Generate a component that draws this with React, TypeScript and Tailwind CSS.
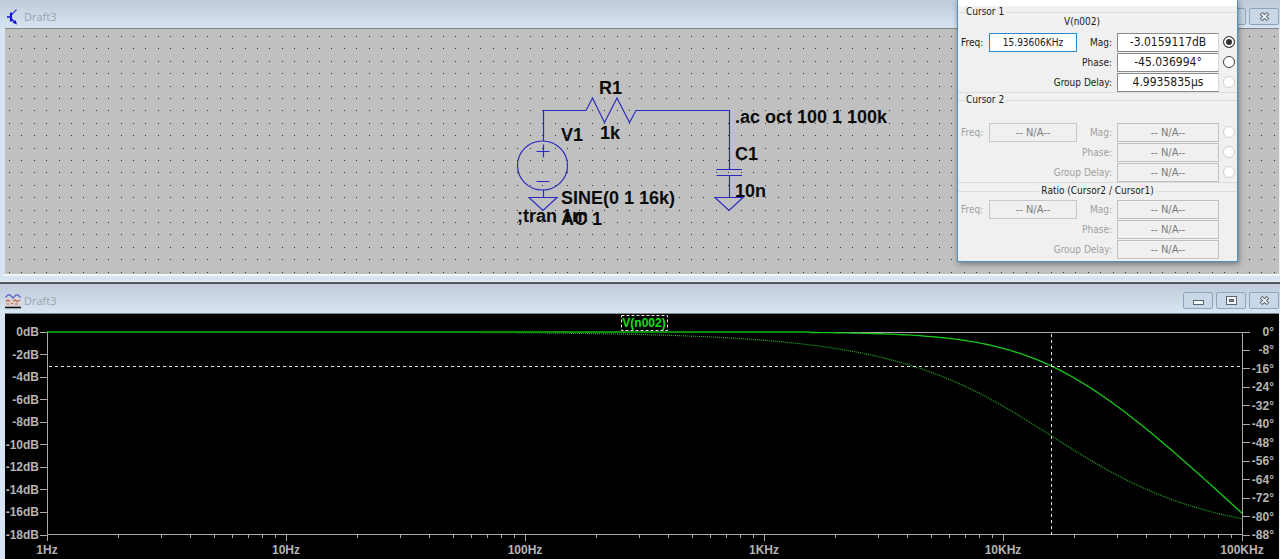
import React from "react";

const GRID_STEP = 12.4;

function buildDotPath() {
  let d = "";
  for (let row = 0; row < 20; row++) {
    const y = Math.round(36 + row * GRID_STEP);
    for (let col = 0; col < 103; col++) {
      d += `M${Math.round(9 + col * GRID_STEP)} ${y}h1v1h-1z`;
    }
  }
  return d;
}

const DOTS = buildDotPath();

const LEFT = 47;
const RIGHT = 1242;
const TOP = 332;
const BOTTOM = 535;
const DECADE = (RIGHT - LEFT) / 5;
const CORNER_HZ = 15915.5;

const xAt = (hz: number) => LEFT + Math.log10(hz) * DECADE;
const yAtDb = (db: number) => TOP + (-db / 18) * (BOTTOM - TOP);
const yAtDeg = (deg: number) => TOP + (-deg / 88) * (BOTTOM - TOP);

function trace(yOf: (hz: number) => number) {
  const points: string[] = [];
  for (let i = 0; i <= 300; i++) {
    const hz = Math.pow(10, (i / 300) * 5);
    points.push(`${xAt(hz).toFixed(2)},${yOf(hz).toFixed(2)}`);
  }
  return points.join(" ");
}

const MAGNITUDE = trace((hz) => yAtDb(-10 * Math.log10(1 + (hz / CORNER_HZ) ** 2)));
const PHASE = trace((hz) => yAtDeg((-Math.atan(hz / CORNER_HZ) * 180) / Math.PI));

const DB_TICKS = [0, -2, -4, -6, -8, -10, -12, -14, -16, -18];
const DEG_TICKS = [0, -8, -16, -24, -32, -40, -48, -56, -64, -72, -80, -88];
const FREQ_LABELS = ["1Hz", "10Hz", "100Hz", "1KHz", "10KHz", "100KHz"];

function WindowButton({ label, children }: { label: string; children: React.ReactNode }) {
  return (
    <button
      type="button"
      aria-label={label}
      className="flex h-[17px] w-[30px] items-center justify-center rounded-[2px] border border-[#8fa3bd] bg-[#c9d7e6]"
    >
      {children}
    </button>
  );
}

function CloseGlyph() {
  return (
    <svg width="11" height="9" viewBox="0 0 11 9">
      <path d="M2 1.2L9 7.8M9 1.2L2 7.8" stroke="#5a6470" strokeWidth="3.8" />
      <path d="M2.5 1.700L8.500 7.300M8.500 1.700L2.500 7.300" stroke="#f4f7fa" strokeWidth="1.7" />
    </svg>
  );
}

function WindowButtons() {
  return (
    <div className="flex gap-[3px]">
      <WindowButton label="Minimize">
        <svg width="11" height="9" viewBox="0 0 11 9">
          <rect x="0.5" y="4.5" width="10" height="4" fill="#f4f7fa" stroke="#5a6470" />
        </svg>
      </WindowButton>
      <WindowButton label="Restore">
        <svg width="11" height="9" viewBox="0 0 11 9">
          <rect x="0.5" y="0.5" width="10" height="8" fill="#f4f7fa" stroke="#5a6470" />
          <rect x="3.5" y="3.5" width="4" height="2" fill="#8b97a6" stroke="#5a6470" />
        </svg>
      </WindowButton>
      <WindowButton label="Close">
        <CloseGlyph />
      </WindowButton>
    </div>
  );
}

function SchematicIcon() {
  return (
    <svg width="14" height="18" viewBox="0 0 14 18">
      <g stroke="#1414e0" fill="none">
        <path d="M1 9H5" strokeWidth="1.6" />
        <path d="M5 4.5V13.5" strokeWidth="2.2" />
        <path d="M5.5 7L10.5 1.5" strokeWidth="1.1" />
        <path d="M5.5 11L9 14.5" strokeWidth="1.4" />
      </g>
      <path d="M11 16.5L6.6 14.8L9.6 12z" fill="#1414e0" />
    </svg>
  );
}

function PlotIcon() {
  return (
    <svg width="16" height="16" viewBox="0 0 16 16">
      <path d="M0.5 4.5L3 2L5 2L8 5L11 2L13 2L15.5 4.5" stroke="#6a64c8" strokeWidth="1.4" fill="none" />
      <rect x="0.5" y="6" width="15" height="7" fill="#dfd0d0" />
      <path d="M1 8.5L3 7L5 8.5M8 8L10 7L12 8.5L15 7" stroke="#b5624f" strokeWidth="1.1" fill="none" />
      <path d="M2 11H4M6 10.5H8M10 11H13" stroke="#b5624f" strokeWidth="1.2" />
      <path d="M0 14.5H16" stroke="#101010" strokeWidth="1.6" />
    </svg>
  );
}

function Schematic() {
  return (
    <svg viewBox="5 29 1274 245" className="block h-auto w-full bg-[#c0c0c0]" role="img" aria-label="RC low-pass schematic">
      <path d={DOTS} fill="#303030" shapeRendering="crispEdges" />
      <g stroke="#2a2abf" strokeWidth="1.2" fill="none">
        <path d="M543.5 141V110.5H586L592.5 98L604.5 122.5L617 98L629.5 122.5L636 110.5H729.5V169.5" />
        <ellipse cx="542.5" cy="165.5" rx="25" ry="24.5" />
        <path d="M543.5 144.5V157.5M536.5 151.5H549.5M536.5 181.5H549.5" />
        <path d="M543.5 190V197.5M529 197.5H557L543 210.5z" />
        <path d="M716.5 169.5H742M716.5 175.5H742M729.5 175.5V197.5M715 197.5H743L729 210.5z" />
      </g>
      <g className="fill-[#0a0a0a] font-['Liberation_Sans',sans-serif] text-[18px] font-bold">
        <text x="599" y="94">R1</text>
        <text x="600" y="139">1k</text>
        <text x="561" y="141">V1</text>
        <text x="735" y="123">.ac oct 100 1 100k</text>
        <text x="735" y="160">C1</text>
        <text x="735" y="197">10n</text>
        <text x="561" y="204">SINE(0 1 16k)</text>
        <text x="517" y="222">;tran 1m</text>
        <text x="561" y="225">AC 1</text>
      </g>
    </svg>
  );
}

function Plot() {
  return (
    <svg viewBox="5 314 1274 245" className="block h-auto w-full bg-black" role="img" aria-label="Magnitude and phase of V(n002)">
      <g stroke="#a8a8a8" fill="none" shapeRendering="crispEdges">
        <path d={`M${LEFT}.5 ${TOP}V${BOTTOM}M${RIGHT}.5 ${TOP}V${BOTTOM}M${LEFT} ${TOP}.5H${RIGHT}M${LEFT} ${BOTTOM - 1}.5H${RIGHT}`} />
        {DB_TICKS.map((db) => (
          <path key={db} d={`M40 ${Math.floor(yAtDb(db))}.5H${LEFT}`} />
        ))}
        {DEG_TICKS.map((deg) => (
          <path key={deg} d={`M${RIGHT} ${Math.floor(yAtDeg(deg))}.5H1250`} />
        ))}
        {FREQ_LABELS.map((label, i) => (
          <path key={label} d={`M${Math.round(LEFT + i * DECADE)}.5 ${BOTTOM}V541`} />
        ))}
        {[0, 1, 2, 3, 4].map((decade) =>
          [2, 3, 4, 5, 6, 7, 8, 9].map((n) => (
            <path key={`${decade}-${n}`} d={`M${Math.floor(xAt(n * 10 ** decade))}.5 ${BOTTOM}V538`} />
          ))
        )}
      </g>
      <polyline points={PHASE} stroke="#22b022" strokeWidth="1.2" strokeDasharray="1 1" fill="none" />
      <polyline points={MAGNITUDE} stroke="#18c818" strokeWidth="1.3" fill="none" />
      <path d="M48 332H810" stroke="#0c8c0c" strokeWidth="2" fill="none" />
      <g stroke="#e8e8e8" strokeDasharray="3 3" fill="none" shapeRendering="crispEdges">
        <path d={`M49 366.5H${RIGHT}`} />
        <path d={`M1051.5 334V${BOTTOM}`} />
      </g>
      <rect x="621.5" y="315.5" width="46" height="15" fill="none" stroke="#e0e0e0" strokeDasharray="3 2" />
      <g className="font-['Liberation_Sans',sans-serif] text-[12px] font-bold">
        <text x="644" y="327" textAnchor="middle" className="fill-[#14e014]">V(n002)</text>
        <g className="fill-[#b4b4b4]">
          {DB_TICKS.map((db) => (
            <text key={db} x="39" y={Math.round(yAtDb(db)) + 4} textAnchor="end">{`${db}dB`}</text>
          ))}
          {DEG_TICKS.map((deg) => (
            <text key={deg} x="1274" y={Math.round(yAtDeg(deg)) + 4} textAnchor="end">{`${deg}°`}</text>
          ))}
          {FREQ_LABELS.map((label, i) => (
            <text key={label} x={Math.round(LEFT + i * DECADE)} y="554" textAnchor="middle">{label}</text>
          ))}
        </g>
      </g>
    </svg>
  );
}

type Field = { id: string; label: string; value: string };

function ReadingRow({
  reading,
  freq,
  active,
  radio,
}: {
  reading: Field;
  freq?: Field;
  active: boolean;
  radio?: { checked: boolean; enabled: boolean; name: string };
}) {
  const ink = active ? "text-[#1a1a1a]" : "text-[#a0a0a0]";
  return (
    <div className={`flex h-5 items-center pl-[3px] pr-0.5 ${ink}`}>
      {freq && (
        <>
          <label htmlFor={freq.id} className="w-7 whitespace-nowrap">{freq.label}</label>
          <input
            id={freq.id}
            defaultValue={freq.value}
            disabled={!active}
            className={
              active
                ? "h-[19px] w-[88px] border border-[#2f86cf] bg-white text-center text-[10px]"
                : "h-[19px] w-[88px] border border-[#c8c8c8] bg-[#f0f0f0] text-center text-[11px] text-[#7c7c7c]"
            }
          />
        </>
      )}
      <label htmlFor={reading.id} className="flex-1 whitespace-nowrap text-right">{reading.label}</label>
      <input
        id={reading.id}
        defaultValue={reading.value}
        readOnly
        disabled={!active}
        className={
          active
            ? "ml-[5px] h-[19px] w-[102px] border border-[#8a8a8a] border-r-[#d8d8d8] bg-white text-center text-[12px]"
            : "ml-[5px] h-[19px] w-[102px] border border-[#c0c0c0] bg-[#f0f0f0] text-center text-[11px] text-[#7c7c7c]"
        }
      />
      <span className="ml-1 flex w-3">
        {radio && (
          <input
            type="radio"
            name={radio.name}
            aria-label={reading.label}
            defaultChecked={radio.checked}
            disabled={!radio.enabled}
            className="size-3 appearance-none rounded-full border border-[#404040] bg-white checked:bg-[#303030] checked:shadow-[inset_0_0_0_2px_white] disabled:border-[#cfcfcf]"
          />
        )}
      </span>
    </div>
  );
}

function CursorDialog() {
  return (
    <div
      role="dialog"
      aria-label="Cursor readings"
      className="absolute right-[42px] top-0 w-[281px] border border-t-0 border-[#4a90c4] bg-[#f0f0f0] pb-0.5 font-['DejaVu_Sans_Condensed','DejaVu_Sans',sans-serif] text-[10px] text-[#1a1a1a] shadow-[1px_2px_6px_rgba(0,0,0,0.4)]"
    >
      <div className="h-1.5 bg-white" />
      <fieldset className="border-y border-[#dcdcdc]">
        <legend className="ml-1.5 px-0.5 leading-3">Cursor 1</legend>
        <p className="mb-1.5 pl-[106px] leading-2">V(n002)</p>
        <ReadingRow
          active
          freq={{ id: "c1-freq", label: "Freq:", value: "15.93606KHz" }}
          reading={{ id: "c1-mag", label: "Mag:", value: "-3.0159117dB" }}
          radio={{ checked: true, enabled: true, name: "cursor1" }}
        />
        <ReadingRow active reading={{ id: "c1-phase", label: "Phase:", value: "-45.036994°" }} radio={{ checked: false, enabled: true, name: "cursor1" }} />
        <ReadingRow active reading={{ id: "c1-delay", label: "Group Delay:", value: "4.9935835µs" }} radio={{ checked: false, enabled: false, name: "cursor1" }} />
      </fieldset>
      <fieldset className="mt-px border-y border-[#dcdcdc]">
        <legend className="mb-4 ml-1.5 px-0.5 leading-3">Cursor 2</legend>
        <ReadingRow
          active={false}
          freq={{ id: "c2-freq", label: "Freq:", value: "-- N/A--" }}
          reading={{ id: "c2-mag", label: "Mag:", value: "-- N/A--" }}
          radio={{ checked: false, enabled: false, name: "cursor2" }}
        />
        <ReadingRow active={false} reading={{ id: "c2-phase", label: "Phase:", value: "-- N/A--" }} radio={{ checked: false, enabled: false, name: "cursor2" }} />
        <ReadingRow active={false} reading={{ id: "c2-delay", label: "Group Delay:", value: "-- N/A--" }} radio={{ checked: false, enabled: false, name: "cursor2" }} />
      </fieldset>
      <fieldset className="mt-0.5 border-t border-[#dcdcdc]">
        <legend className="mx-auto mb-0.5 px-0.5 leading-3">Ratio (Cursor2 / Cursor1)</legend>
        <ReadingRow
          active={false}
          freq={{ id: "r-freq", label: "Freq:", value: "-- N/A--" }}
          reading={{ id: "r-mag", label: "Mag:", value: "-- N/A--" }}
        />
        <ReadingRow active={false} reading={{ id: "r-phase", label: "Phase:", value: "-- N/A--" }} />
        <ReadingRow active={false} reading={{ id: "r-delay", label: "Group Delay:", value: "-- N/A--" }} />
      </fieldset>
    </div>
  );
}

function TitleBar({ icon }: { icon: React.ReactNode }) {
  return (
    <header className="flex h-[29px] items-center justify-between bg-linear-to-b from-[#bfcbd9] to-[#d8e5f3] pl-[5px] pr-px pt-1">
      <div className="flex items-center gap-[3px]">
        <span className="flex w-4 justify-center">{icon}</span>
        <h2 className="font-['Open_Sans',sans-serif] text-[11px] leading-4 text-[#9aa3ad]">Draft3</h2>
      </div>
      <WindowButtons />
    </header>
  );
}

export default function App() {
  return (
    <main className="overflow-hidden bg-[#d7e4f2]">
      <section className="relative">
        <TitleBar icon={<SchematicIcon />} />
        <div className="-mt-px border-b-2 border-l-[5px] border-r border-b-[#f4f7fa] border-l-[#d7e4f2] border-r-[#e8eef4]">
          <div className="border-t border-[#7f858c]">
            <Schematic />
          </div>
        </div>
        <div className="h-1.5 border-b border-[#eaf1f8]" />
        <CursorDialog />
      </section>
      <section className="border-t-2 border-[#55585e]">
        <TitleBar icon={<PlotIcon />} />
        <div className="border-l-[5px] border-r border-l-[#d7e4f2] border-r-[#e8eef4]">
          <div className="border-t border-[#7f858c]">
            <Plot />
          </div>
        </div>
      </section>
    </main>
  );
}
